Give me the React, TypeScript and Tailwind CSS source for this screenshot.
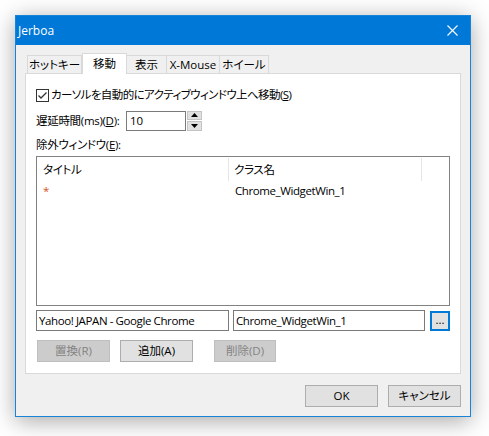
import React from "react";

const font = "[font-family:'Open_Sans','Noto_Sans_CJK_JP',sans-serif] [font-feature-settings:'palt']";

function Tab({ label, w, selected }: { label: string; w: string; selected?: boolean }) {
  if (selected) {
    return (
      <div
        className={`${w} h-[21px] -mb-px relative z-10 bg-white border border-b-0 border-[#d9d9d9] flex items-center justify-center text-[11.5px] text-black whitespace-nowrap`}
      >
        {label}
      </div>
    );
  }
  return (
    <div
      className={`${w} h-[18px] bg-[#f0f0f0] border border-b-0 border-[#d9d9d9] -ml-px first:ml-0 flex items-center justify-center text-[11.5px] text-black whitespace-nowrap`}
    >
      {label}
    </div>
  );
}

function Btn({ label, disabled, w = "w-[73px]" }: { label: string; disabled?: boolean; w?: string }) {
  return (
    <div
      className={`${w} h-[22px] flex items-center justify-center text-[11.5px] border whitespace-nowrap ${
        disabled ? "bg-[#cccccc] border-[#bfbfbf] text-[#838383]" : "bg-[#e1e1e1] border-[#adadad] text-black"
      }`}
    >
      {label}
    </div>
  );
}

export default function App() {
  return (
    <div className={`w-[489px] h-[436px] bg-white pl-[15px] pt-[15px] ${font}`}>
      <div className="w-[456px] h-[402px] border border-[#1883d7] bg-[#f0f0f0] flex flex-col shadow-[0_4px_22px_rgba(0,0,0,0.35)]">
        {/* title bar */}
        <div className="h-[29px] bg-[#0078d7] flex items-center justify-between pl-[2px] pr-[12px]">
          <span className="text-white text-[12px]">Jerboa</span>
          <svg width="11" height="11" viewBox="0 0 11 11">
            <path d="M0.5 0.5 L10.5 10.5 M10.5 0.5 L0.5 10.5" stroke="white" strokeWidth="1.1" />
          </svg>
        </div>
        {/* body */}
        <div className="flex-1 flex flex-col pl-[9px] pr-[9px] pt-[8px]">
          <div className="flex items-end h-[20px] pl-[2px]">
            <Tab label="ホットキー" w="w-[55px]" />
            <Tab label="移動" w="w-[45px]" selected />
            <Tab label="表示" w="w-[41px]" />
            <Tab label="X-Mouse" w="w-[54px]" />
            <Tab label="ホイール" w="w-[50px]" />
          </div>
          <div className="h-[301px] bg-white border border-[#d9d9d9] flex flex-col pl-[10px] pr-[10px] text-[11.5px] text-black">
            {/* checkbox row */}
            <div className="flex items-center mt-[14px] h-[14px] whitespace-nowrap">
              <svg width="13" height="13" viewBox="0 0 13 13" className="shrink-0">
                <rect x="0.5" y="0.5" width="12" height="12" fill="white" stroke="#333333" />
                <path d="M2.5 6.5 L5 9 L10.5 3.5" fill="none" stroke="#333333" strokeWidth="1.3" />
              </svg>
              <span className="ml-[2px] tracking-[-0.6px]">
                カーソルを自動的にアクティブウィンドウ上へ移動(<span className="underline">S</span>)
              </span>
            </div>
            {/* delay row */}
            <div className="flex items-center mt-[8px] h-[21px] whitespace-nowrap">
              <span className="w-[90px] shrink-0 tracking-[-0.3px]">
                遅延時間(ms)(<span className="underline">D</span>):
              </span>
              <div className="w-[60px] h-[20px] border border-[#7a7a7a] flex items-center pl-[3px]">10</div>
              <div className="ml-[1px] w-[15px] h-[20px] flex flex-col gap-[1px]">
                <div className="flex-1 bg-[#e1e1e1] border border-[#c4c4c4] flex items-center justify-center">
                  <svg width="7" height="4" viewBox="0 0 7 4">
                    <path d="M0 4 L3.5 0 L7 4 Z" fill="black" />
                  </svg>
                </div>
                <div className="flex-1 bg-[#e1e1e1] border border-[#c4c4c4] flex items-center justify-center">
                  <svg width="7" height="4" viewBox="0 0 7 4">
                    <path d="M0 0 L3.5 4 L7 0 Z" fill="black" />
                  </svg>
                </div>
              </div>
            </div>
            {/* exclusion label */}
            <div className="mt-[5px] h-[17px] flex items-center whitespace-nowrap tracking-[-0.3px]">
              除外ウィンドウ(<span className="underline">E</span>):
            </div>
            {/* list */}
            <div className="mt-[3px] h-[150px] border border-[#828282] bg-white flex flex-col">
              <div className="h-[25px] flex items-stretch">
                <div className="w-[192px] flex items-center pl-[6px] border-r border-[#e5e5e5] my-[1px] tracking-[-0.3px]">タイトル</div>
                <div className="w-[193px] flex items-center pl-[5px] border-r border-[#e5e5e5] my-[1px] tracking-[-0.3px]">クラス名</div>
                <div className="flex-1" />
              </div>
              <div className="h-[17px] flex items-center">
                <div className="w-[192px] pl-[6px] text-[#d9501f]">*</div>
                <div className="pl-[6px] tracking-[-0.4px]">Chrome_WidgetWin_1</div>
              </div>
            </div>
            {/* edit row */}
            <div className="mt-[4px] flex items-center h-[21px] whitespace-nowrap tracking-[-0.4px]">
              <div className="w-[193px] h-[21px] border border-[#7a7a7a] flex items-center pl-[2px]">
                Yahoo! JAPAN - Google Chrome
              </div>
              <div className="ml-[4px] w-[192px] h-[21px] border border-[#7a7a7a] flex items-center pl-[2px]">
                Chrome_WidgetWin_1
              </div>
              <div className="ml-[5px] w-[20px] h-[20px] border-2 border-[#0078d7] bg-[#e1e1e1] flex items-end justify-center pb-[3px] leading-none tracking-normal">
                ...
              </div>
            </div>
            {/* buttons row */}
            <div className="mt-[9px] flex items-center gap-[10px] pl-[1px]">
              <Btn label="置換(R)" disabled />
              <Btn label="追加(A)" />
              <div className="ml-[11px]">
                <Btn label="削除(D)" disabled w="w-[62px]" />
              </div>
            </div>
          </div>
          <div className="mt-[11px] flex justify-end gap-[10px]">
            <Btn label="OK" />
            <Btn label="キャンセル" />
          </div>
        </div>
      </div>
    </div>
  );
}
